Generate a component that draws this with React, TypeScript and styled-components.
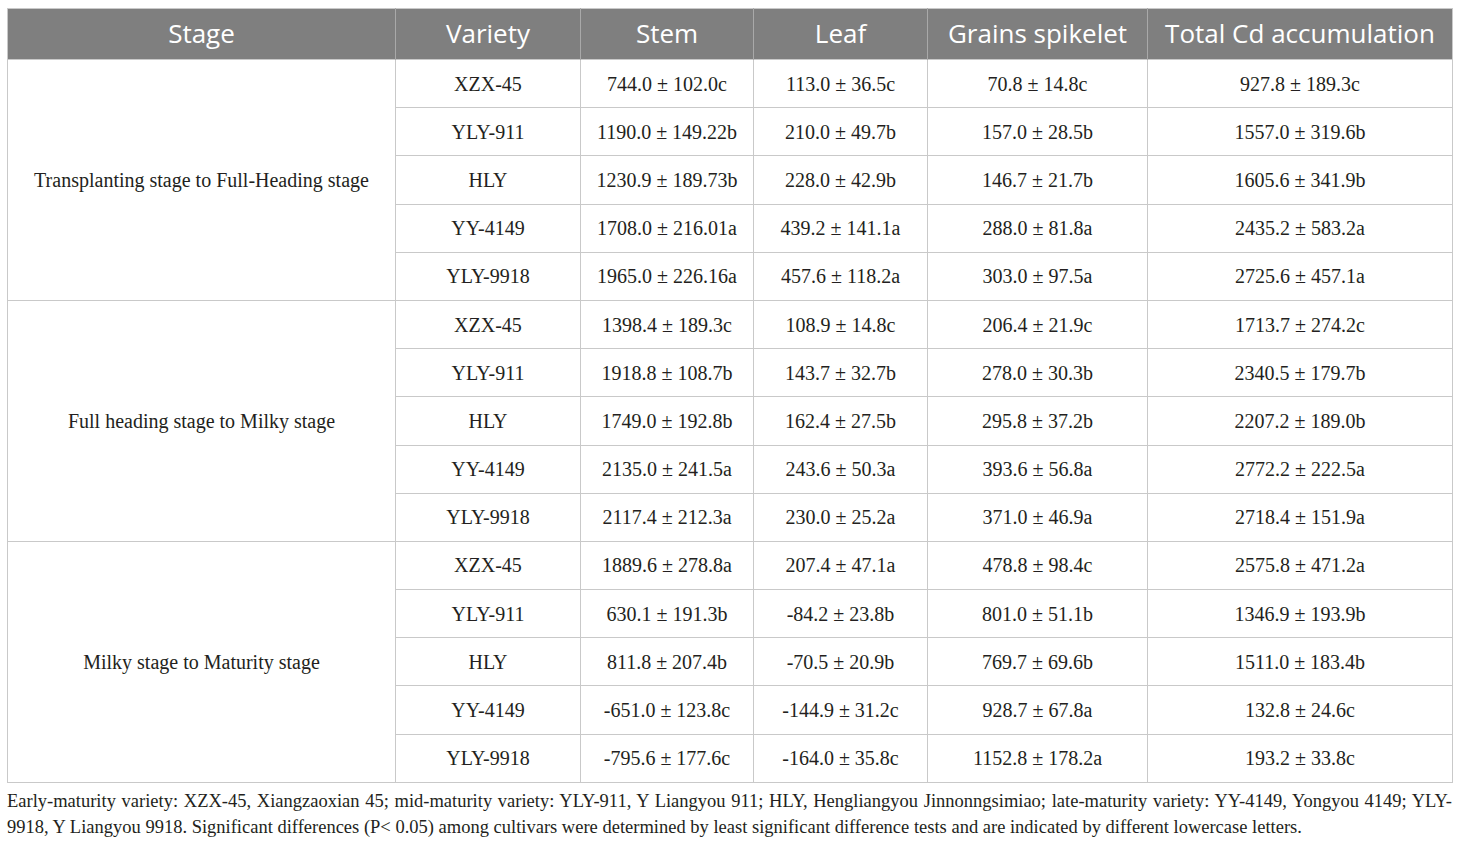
import React from "react";
import styled, { createGlobalStyle } from "styled-components";

// ============================================
// DATA
// ============================================
interface Row {
  variety: string;
  stem: string;
  leaf: string;
  grains: string;
  total: string;
}

interface Group {
  stage: string;
  rows: Row[];
}

const HEADERS = [
  "Stage",
  "Variety",
  "Stem",
  "Leaf",
  "Grains spikelet",
  "Total Cd accumulation",
];

const COL_WIDTHS = [388, 185, 173, 174, 220, 305];

const GROUPS: Group[] = [
  {
    stage: "Transplanting stage to Full-Heading stage",
    rows: [
      { variety: "XZX-45", stem: "744.0 ± 102.0c", leaf: "113.0 ± 36.5c", grains: "70.8 ± 14.8c", total: "927.8 ± 189.3c" },
      { variety: "YLY-911", stem: "1190.0 ± 149.22b", leaf: "210.0 ± 49.7b", grains: "157.0 ± 28.5b", total: "1557.0 ± 319.6b" },
      { variety: "HLY", stem: "1230.9 ± 189.73b", leaf: "228.0 ± 42.9b", grains: "146.7 ± 21.7b", total: "1605.6 ± 341.9b" },
      { variety: "YY-4149", stem: "1708.0 ± 216.01a", leaf: "439.2 ± 141.1a", grains: "288.0 ± 81.8a", total: "2435.2 ± 583.2a" },
      { variety: "YLY-9918", stem: "1965.0 ± 226.16a", leaf: "457.6 ± 118.2a", grains: "303.0 ± 97.5a", total: "2725.6 ± 457.1a" },
    ],
  },
  {
    stage: "Full heading stage to Milky stage",
    rows: [
      { variety: "XZX-45", stem: "1398.4 ± 189.3c", leaf: "108.9 ± 14.8c", grains: "206.4 ± 21.9c", total: "1713.7 ± 274.2c" },
      { variety: "YLY-911", stem: "1918.8 ± 108.7b", leaf: "143.7 ± 32.7b", grains: "278.0 ± 30.3b", total: "2340.5 ± 179.7b" },
      { variety: "HLY", stem: "1749.0 ± 192.8b", leaf: "162.4 ± 27.5b", grains: "295.8 ± 37.2b", total: "2207.2 ± 189.0b" },
      { variety: "YY-4149", stem: "2135.0 ± 241.5a", leaf: "243.6 ± 50.3a", grains: "393.6 ± 56.8a", total: "2772.2 ± 222.5a" },
      { variety: "YLY-9918", stem: "2117.4 ± 212.3a", leaf: "230.0 ± 25.2a", grains: "371.0 ± 46.9a", total: "2718.4 ± 151.9a" },
    ],
  },
  {
    stage: "Milky stage to Maturity stage",
    rows: [
      { variety: "XZX-45", stem: "1889.6 ± 278.8a", leaf: "207.4 ± 47.1a", grains: "478.8 ± 98.4c", total: "2575.8 ± 471.2a" },
      { variety: "YLY-911", stem: "630.1 ± 191.3b", leaf: "-84.2 ± 23.8b", grains: "801.0 ± 51.1b", total: "1346.9 ± 193.9b" },
      { variety: "HLY", stem: "811.8 ± 207.4b", leaf: "-70.5 ± 20.9b", grains: "769.7 ± 69.6b", total: "1511.0 ± 183.4b" },
      { variety: "YY-4149", stem: "-651.0 ± 123.8c", leaf: "-144.9 ± 31.2c", grains: "928.7 ± 67.8a", total: "132.8 ± 24.6c" },
      { variety: "YLY-9918", stem: "-795.6 ± 177.6c", leaf: "-164.0 ± 35.8c", grains: "1152.8 ± 178.2a", total: "193.2 ± 33.8c" },
    ],
  },
];

// ============================================
// STYLES
// ============================================
const GlobalStyle = createGlobalStyle`
  html, body {
    margin: 0;
    padding: 0;
    background: #ffffff;
  }
`;

const Page = styled.div`
  padding: 8px 8px 0 7px;
  width: 1445px;
`;

const Table = styled.table`
  width: 1445px;
  border-collapse: collapse;
  table-layout: fixed;
  border: 1px solid #c9c9c9;
`;

const HeadCell = styled.th`
  height: 48px;
  padding: 0 0 2px;
  background: #7f7f7f;
  color: #ffffff;
  font-family: "Open Sans", "Noto Sans", sans-serif;
  font-size: 26px;
  line-height: 30px;
  font-weight: 400;
  text-align: center;
  vertical-align: middle;
  border-left: 1px solid #a9a9a9;
  white-space: nowrap;

  &:first-child {
    border-left: none;
  }
`;

const Cell = styled.td`
  height: 47.2px;
  padding: 0;
  border: 1px solid #c9c9c9;
  color: #231f20;
  font-family: "Liberation Serif", "Times New Roman", serif;
  font-size: 20px;
  line-height: 24px;
  text-align: center;
  vertical-align: middle;
  white-space: nowrap;
`;

const Footnote = styled.p`
  margin: 5px 0 0;
  font-family: "Liberation Serif", "Times New Roman", serif;
  font-size: 18.5px;
  line-height: 26px;
  color: #231f20;
  text-align: justify;
`;

// ============================================
// MAIN COMPONENT
// ============================================
export default function App() {
  return (
    <>
      <GlobalStyle />
      <Page>
        <Table>
          <colgroup>
            {COL_WIDTHS.map((w, i) => (
              <col key={i} style={{ width: w }} />
            ))}
          </colgroup>
          <thead>
            <tr>
              {HEADERS.map((h) => (
                <HeadCell key={h}>{h}</HeadCell>
              ))}
            </tr>
          </thead>
          <tbody>
            {GROUPS.map((g) =>
              g.rows.map((r, i) => (
                <tr key={g.stage + r.variety}>
                  {i === 0 && <Cell rowSpan={g.rows.length}>{g.stage}</Cell>}
                  <Cell>{r.variety}</Cell>
                  <Cell>{r.stem}</Cell>
                  <Cell>{r.leaf}</Cell>
                  <Cell>{r.grains}</Cell>
                  <Cell>{r.total}</Cell>
                </tr>
              ))
            )}
          </tbody>
        </Table>
        <Footnote>
          Early-maturity variety: XZX-45, Xiangzaoxian 45; mid-maturity variety:
          YLY-911, Y Liangyou 911; HLY, Hengliangyou Jinnonngsimiao;
          late-maturity variety: YY-4149, Yongyou 4149; YLY-<wbr />9918, Y
          Liangyou 9918. Significant differences (P&lt; 0.05) among cultivars
          were determined by least significant difference tests and are
          indicated by different lowercase letters.
        </Footnote>
      </Page>
    </>
  );
}
